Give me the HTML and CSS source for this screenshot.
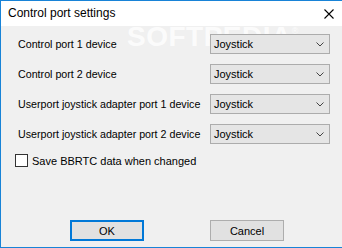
FILE: index.html
```html
<!DOCTYPE html>
<html>
<head>
<meta charset="utf-8">
<link rel="stylesheet" href="styles.css">
</head>
<body>
<div class="window">
  <div class="titlebar">
    <span class="title">Control port settings</span>
    <svg class="close" width="10" height="10" viewBox="0 0 10 10"><path d="M0.5 0.5 L9.5 9.5 M9.5 0.5 L0.5 9.5" stroke="#000" stroke-width="1.1" fill="none"/></svg>
  </div>
  <div class="content">
    <div class="watermark">SOFTPEDIA<sup>®</sup></div>
    <div class="grid">
      <span class="label">Control port 1 device</span>
      <div class="combo"><span>Joystick</span><svg width="8" height="5" viewBox="0 0 8 5"><path d="M0.5 0.5 L4 4 L7.5 0.5" stroke="#444" fill="none"/></svg></div>
      <span class="label">Control port 2 device</span>
      <div class="combo"><span>Joystick</span><svg width="8" height="5" viewBox="0 0 8 5"><path d="M0.5 0.5 L4 4 L7.5 0.5" stroke="#444" fill="none"/></svg></div>
      <span class="label">Userport joystick adapter port 1 device</span>
      <div class="combo"><span>Joystick</span><svg width="8" height="5" viewBox="0 0 8 5"><path d="M0.5 0.5 L4 4 L7.5 0.5" stroke="#444" fill="none"/></svg></div>
      <span class="label">Userport joystick adapter port 2 device</span>
      <div class="combo"><span>Joystick</span><svg width="8" height="5" viewBox="0 0 8 5"><path d="M0.5 0.5 L4 4 L7.5 0.5" stroke="#444" fill="none"/></svg></div>
    </div>
    <label class="check"><span class="box"></span><span>Save BBRTC data when changed</span></label>
    <div class="buttons">
      <div class="btn default">OK</div>
      <div class="btn">Cancel</div>
    </div>
  </div>
</div>
</body>
</html>
```
FILE: styles.css
```css
* { box-sizing: border-box; }
html, body { margin: 0; padding: 0; }
body {
  width: 342px;
  height: 248px;
  overflow: hidden;
  font-family: "Liberation Sans", Arial, sans-serif;
  color: #000;
}
.window {
  width: 342px;
  height: 248px;
  background: #f0f0f0;
  border-top: 1px solid #1883d7;
  border-left: 1px solid #1883d7;
  border-bottom: 1px solid #1883d7;
  display: flex;
  flex-direction: column;
}
.titlebar {
  height: 25px;
  background: #fff;
  display: flex;
  align-items: center;
  justify-content: space-between;
  padding: 0 8px 0 7px;
  flex-shrink: 0;
}
.title {
  font-size: 12px;
  line-height: 14px;
  margin-top: -1px;
}
.close { display: block; margin-top: 1px; }
.content {
  position: relative;
  padding: 8px 12px 0 14px;
  font-size: 10.7px;
  flex: 1;
}
.watermark {
  position: absolute;
  left: 126px;
  top: 1px;
  font-size: 28px;
  font-weight: bold;
  color: rgba(255,255,255,0.8);
  letter-spacing: 0.5px;
  line-height: 20px;
  pointer-events: none;
}
.watermark sup { font-size: 9px; vertical-align: top; font-weight: normal; line-height: 9px; }
.grid {
  position: relative;
  display: grid;
  grid-template-columns: 195px 120px;
  grid-auto-rows: 20px;
  row-gap: 10px;
  align-items: center;
}
.label { padding-left: 3px; }
.combo {
  height: 20px;
  background: #e5e5e5;
  border: 1px solid #acacac;
  display: flex;
  align-items: center;
  justify-content: space-between;
  padding: 0 5px 0 3px;
  font-size: 11px;
}
.combo svg { display: block; }
.check {
  display: flex;
  align-items: center;
  gap: 4px;
  margin-top: 10px;
  height: 13px;
  font-size: 11px;
}
.box {
  width: 13px;
  height: 13px;
  border: 1px solid #333;
  background: #fff;
}
.buttons {
  display: flex;
  gap: 66px;
  margin-top: 53px;
  margin-left: 55px;
}
.btn {
  width: 74px;
  height: 21px;
  background: #e1e1e1;
  border: 1px solid #adadad;
  display: flex;
  align-items: center;
  justify-content: center;
  font-size: 11px;
}
.btn.default { border: 2px solid #0078d7; }
```
